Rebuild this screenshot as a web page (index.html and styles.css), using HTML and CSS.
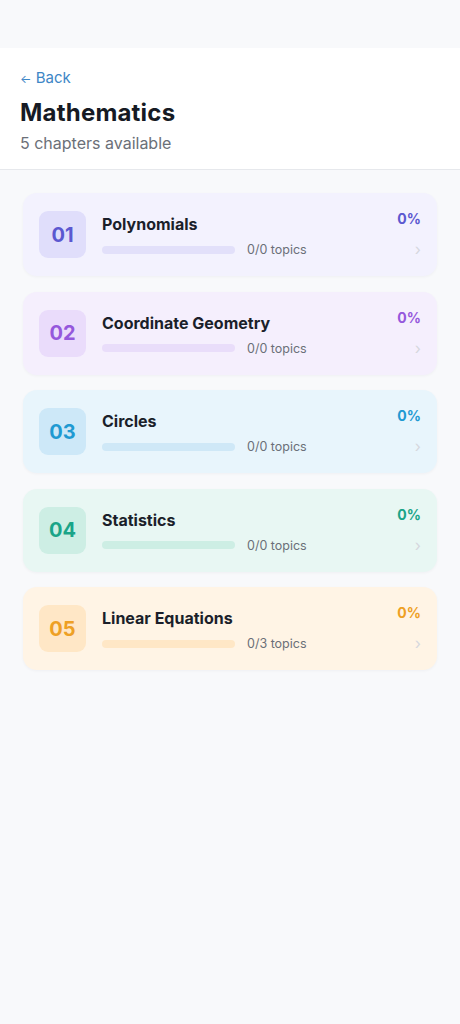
FILE: index.html
```html
<!DOCTYPE html>
<html>
<head>
<meta charset="utf-8">
<link rel="stylesheet" href="styles.css">
</head>
<body>
<div class="topbar"></div>
<header class="header">
  <a class="back"><span class="arrow">←</span> Back</a>
  <h1 class="title">Mathematics</h1>
  <p class="subtitle">5 chapters available</p>
</header>
<main class="list">
  <div class="card c1">
    <div class="badge">01</div>
    <div class="info">
      <div class="name">Polynomials</div>
      <div class="progress-row"><div class="bar"></div><span class="topics">0/0 topics</span></div>
    </div>
    <div class="side"><span class="pct">0%</span><span class="chev">›</span></div>
  </div>
  <div class="card c2">
    <div class="badge">02</div>
    <div class="info">
      <div class="name">Coordinate Geometry</div>
      <div class="progress-row"><div class="bar"></div><span class="topics">0/0 topics</span></div>
    </div>
    <div class="side"><span class="pct">0%</span><span class="chev">›</span></div>
  </div>
  <div class="card c3">
    <div class="badge">03</div>
    <div class="info">
      <div class="name">Circles</div>
      <div class="progress-row"><div class="bar"></div><span class="topics">0/0 topics</span></div>
    </div>
    <div class="side"><span class="pct">0%</span><span class="chev">›</span></div>
  </div>
  <div class="card c4">
    <div class="badge">04</div>
    <div class="info">
      <div class="name">Statistics</div>
      <div class="progress-row"><div class="bar"></div><span class="topics">0/0 topics</span></div>
    </div>
    <div class="side"><span class="pct">0%</span><span class="chev">›</span></div>
  </div>
  <div class="card c5">
    <div class="badge">05</div>
    <div class="info">
      <div class="name">Linear Equations</div>
      <div class="progress-row"><div class="bar"></div><span class="topics">0/3 topics</span></div>
    </div>
    <div class="side"><span class="pct">0%</span><span class="chev">›</span></div>
  </div>
</main>
</body>
</html>
```
FILE: styles.css
```css
* { box-sizing: border-box; }
html, body { margin: 0; padding: 0; }
body {
  background: #f8f9fb;
  font-family: Inter, "Noto Sans", sans-serif;
  color: #1a1d26;
  min-height: 1024px;
}
.topbar { height: 48px; background: #f8f9fb; }
.header {
  background: #ffffff;
  padding: 21px 20px 16px;
  border-bottom: 1px solid #e6e8ec;
}
.back {
  display: block;
  color: #3d86c6;
  font-size: 15px;
  line-height: 18px;
  text-decoration: none;
}
.arrow { font-size: 12px; }
.title {
  margin: 10px 0 0;
  font-size: 24px;
  line-height: 30px;
  font-weight: 700;
  color: #161a24;
  letter-spacing: 0.2px;
}
.subtitle {
  margin: 5px 0 0;
  font-size: 16px;
  line-height: 20px;
  color: #6b7078;
}
.list {
  padding: 23px 23px;
  display: flex;
  flex-direction: column;
  gap: 15.5px;
}
.card {
  display: flex;
  align-items: center;
  height: 83px;
  padding: 0 16px;
  border-radius: 14px;
  box-shadow: 0 1px 3px rgba(20, 30, 60, 0.04);
}
.badge {
  width: 47px;
  height: 47px;
  border-radius: 9px;
  display: flex;
  align-items: center;
  justify-content: center;
  font-size: 20px;
  font-weight: 700;
  flex: none;
}
.info {
  margin-left: 16px;
  flex: 1;
  display: flex;
  flex-direction: column;
  gap: 8px;
  padding-top: 2px;
}
.name {
  font-size: 16px;
  line-height: 20px;
  font-weight: 700;
  color: #1b1f2a;
}
.progress-row {
  display: flex;
  align-items: center;
  gap: 12px;
}
.bar {
  width: 133px;
  height: 8px;
  border-radius: 4px;
}
.topics {
  font-size: 12.5px;
  color: #6b6f78;
}
.side {
  align-self: stretch;
  display: flex;
  flex-direction: column;
  align-items: flex-end;
  padding-top: 17px;
  gap: 12px;
}
.pct {
  font-size: 14px;
  line-height: 18px;
  font-weight: 700;
}
.chev {
  font-size: 16px;
  line-height: 18px;
  color: #d6d8de;
}
.c1 { background: #f3f2fe; }
.c1 .badge { background: #e0defb; color: #5b58d0; }
.c1 .bar { background: #e2e0fa; }
.c1 .pct { color: #5b58d0; }
.c2 { background: #f5effd; }
.c2 .badge { background: #eadcfb; color: #9558dc; }
.c2 .bar { background: #e9ddfa; }
.c2 .pct { color: #9558dc; }
.c3 { background: #e8f5fc; }
.c3 .badge { background: #cde8f8; color: #1f9ad2; }
.c3 .bar { background: #cfe8f7; }
.c3 .pct { color: #1f9ad2; }
.c4 { background: #e8f7f3; }
.c4 .badge { background: #cdeee4; color: #1aa488; }
.c4 .bar { background: #cdeee4; }
.c4 .pct { color: #1aa488; }
.c5 { background: #fff4e5; }
.c5 .badge { background: #ffe7c6; color: #eea024; }
.c5 .bar { background: #ffe7c6; }
.c5 .pct { color: #eea024; }
```
